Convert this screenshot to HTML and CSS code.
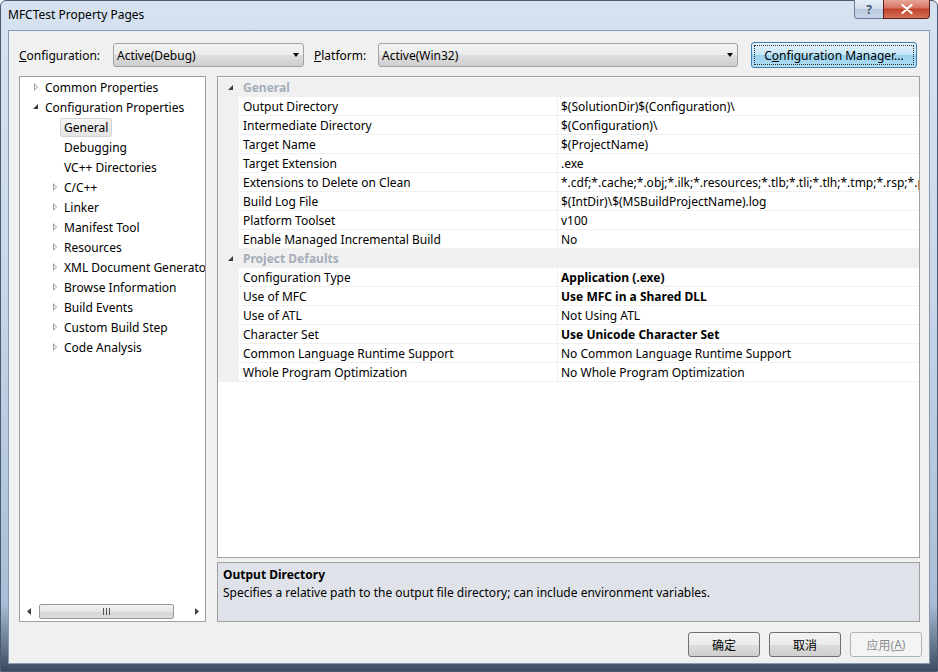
FILE: index.html
```html
<!DOCTYPE html>
<html>
<head>
<meta charset="utf-8">
<link rel="stylesheet" href="styles.css">
</head>
<body>
<div class="window">
  <div class="titlebar">
    <span class="title">MFCTest Property Pages</span>
    <div class="caption-btns">
      <div class="cap help">?</div>
      <div class="cap close">
        <svg width="12" height="10" viewBox="0 0 12 10"><path d="M1.5 1 L10.5 9 M10.5 1 L1.5 9" stroke="#fff" stroke-width="2.2" stroke-linecap="round"/></svg>
      </div>
    </div>
  </div>
  <div class="client">
    <div class="config-row">
      <label class="lbl lbl-config"><u>C</u>onfiguration:</label>
      <div class="combo combo-config"><span>Active(Debug)</span><span class="dd"></span></div>
      <label class="lbl lbl-platform"><u>P</u>latform:</label>
      <div class="combo combo-platform"><span>Active(Win32)</span><span class="dd"></span></div>
      <div class="btn btn-manager"><span class="focus">C<u>o</u>nfiguration Manager...</span></div>
    </div>
    <div class="main">
      <div class="tree">
        <div class="tree-items">
          <div class="ti l0"><span class="arr closed"></span>Common Properties</div>
          <div class="ti l0"><span class="arr open"></span>Configuration Properties</div>
          <div class="ti l1"><span class="arr none"></span><span class="sel">General</span></div>
          <div class="ti l1"><span class="arr none"></span>Debugging</div>
          <div class="ti l1"><span class="arr none"></span>VC++ Directories</div>
          <div class="ti l1"><span class="arr closed"></span>C/C++</div>
          <div class="ti l1"><span class="arr closed"></span>Linker</div>
          <div class="ti l1"><span class="arr closed"></span>Manifest Tool</div>
          <div class="ti l1"><span class="arr closed"></span>Resources</div>
          <div class="ti l1"><span class="arr closed"></span>XML Document Generator</div>
          <div class="ti l1"><span class="arr closed"></span>Browse Information</div>
          <div class="ti l1"><span class="arr closed"></span>Build Events</div>
          <div class="ti l1"><span class="arr closed"></span>Custom Build Step</div>
          <div class="ti l1"><span class="arr closed"></span>Code Analysis</div>
        </div>
        <div class="hscroll">
          <span class="sarrow">
            <svg width="4" height="7" viewBox="0 0 4 7"><path d="M4 0 L0 3.5 L4 7 Z" fill="#404040"/></svg>
          </span>
          <div class="strack"><div class="thumb"><span class="grip"></span></div></div>
          <span class="sarrow">
            <svg width="4" height="7" viewBox="0 0 4 7"><path d="M0 0 L4 3.5 L0 7 Z" fill="#404040"/></svg>
          </span>
        </div>
      </div>
      <div class="right">
        <div class="grid">
          <div class="cat"><span class="gut"><span class="catarr"></span></span><span class="catname">General</span></div>
          <div class="row"><span class="gut"></span><span class="nm">Output Directory</span><span class="vl">$(SolutionDir)$(Configuration)\</span></div>
          <div class="row"><span class="gut"></span><span class="nm">Intermediate Directory</span><span class="vl">$(Configuration)\</span></div>
          <div class="row"><span class="gut"></span><span class="nm">Target Name</span><span class="vl">$(ProjectName)</span></div>
          <div class="row"><span class="gut"></span><span class="nm">Target Extension</span><span class="vl">.exe</span></div>
          <div class="row"><span class="gut"></span><span class="nm">Extensions to Delete on Clean</span><span class="vl">*.cdf;*.cache;*.obj;*.ilk;*.resources;*.tlb;*.tli;*.tlh;*.tmp;*.rsp;*.pgc;*.pgd;*.meta;$(TargetPath)</span></div>
          <div class="row"><span class="gut"></span><span class="nm">Build Log File</span><span class="vl">$(IntDir)\$(MSBuildProjectName).log</span></div>
          <div class="row"><span class="gut"></span><span class="nm">Platform Toolset</span><span class="vl">v100</span></div>
          <div class="row"><span class="gut"></span><span class="nm">Enable Managed Incremental Build</span><span class="vl">No</span></div>
          <div class="cat"><span class="gut"><span class="catarr"></span></span><span class="catname">Project Defaults</span></div>
          <div class="row"><span class="gut"></span><span class="nm">Configuration Type</span><span class="vl b">Application (.exe)</span></div>
          <div class="row"><span class="gut"></span><span class="nm">Use of MFC</span><span class="vl b">Use MFC in a Shared DLL</span></div>
          <div class="row"><span class="gut"></span><span class="nm">Use of ATL</span><span class="vl">Not Using ATL</span></div>
          <div class="row"><span class="gut"></span><span class="nm">Character Set</span><span class="vl b">Use Unicode Character Set</span></div>
          <div class="row"><span class="gut"></span><span class="nm">Common Language Runtime Support</span><span class="vl">No Common Language Runtime Support</span></div>
          <div class="row"><span class="gut"></span><span class="nm">Whole Program Optimization</span><span class="vl">No Whole Program Optimization</span></div>
        </div>
        <div class="desc">
          <div class="desc-title">Output Directory</div>
          <div class="desc-text">Specifies a relative path to the output file directory; can include environment variables.</div>
        </div>
      </div>
    </div>
    <div class="buttons">
      <div class="btn btn-dlg">确定</div>
      <div class="btn btn-dlg">取消</div>
      <div class="btn btn-dlg disabled">应用(<u>A</u>)</div>
    </div>
  </div>
</div>
</body>
</html>
```
FILE: styles.css
```css
* { box-sizing: border-box; }
html, body { margin: 0; padding: 0; }
body {
  width: 938px; height: 672px; overflow: hidden;
  font-family: "Noto Sans", "Noto Sans CJK SC", sans-serif;
  font-size: 12px;
  color: #000;
}
.window {
  width: 938px; height: 672px;
  background: linear-gradient(180deg, #d6e2ef 0%, #cad9ea 40%, #a9bdd6 90%, #3b4b60 100%);
  border: 1px solid #4a5a70;
  border-radius: 6px 6px 0 0;
  display: flex; flex-direction: column;
}
.titlebar {
  height: 29px;
  display: flex; align-items: flex-start; justify-content: space-between;
  padding-left: 7px;
}
.title { font-size: 12px; margin-top: 5px; color: #000; }
.caption-btns { display: flex; margin-right: 7px; margin-top: -1px; }
.cap {
  height: 19px; display: flex; align-items: center; justify-content: center;
  border: 1px solid #6b7d96; border-top: none;
}
.help {
  width: 29px; border-radius: 0 0 0 4px; border-right: none;
  background: linear-gradient(180deg, #e6eef8 0%, #d2dded 50%, #bccbe0 51%, #c8d6ea 100%);
  color: #4a5a70; font-size: 12px; font-weight: bold;
}
.close {
  width: 47px; border-radius: 0 0 4px 0;
  border-color: #5a2020;
  background: linear-gradient(180deg, #e7a597 0%, #d6735f 45%, #c2412a 50%, #d4715a 100%);
}
.client {
  flex: 1;
  margin: 0 7px 7px 7px;
  background: #f0f0f0;
  border: 1px solid #8899b0;
  display: flex; flex-direction: column;
  padding: 11px 9px 0 10px;
}
.config-row {
  display: flex; align-items: center; height: 26px;
}
.lbl { font-size: 12px; flex: none; }
.lbl-config { width: 94px; }
.lbl-platform { margin-left: 10px; width: 64px; }
.combo {
  flex: none;
  height: 24px;
  border: 1px solid #a3a3a3; border-radius: 3px;
  background: linear-gradient(180deg, #f2f2f2 0%, #ebebeb 50%, #dddddd 51%, #cfcfcf 100%);
  display: flex; align-items: center; justify-content: space-between;
  padding: 0 4px 0 3px; font-size: 12px;
}
.combo-config { width: 191px; }
.combo-platform { width: 360px; }
.dd {
  width: 0; height: 0;
  border-left: 3.5px solid transparent; border-right: 3.5px solid transparent;
  border-top: 4px solid #000;
}
.btn {
  flex: none;
  display: flex; align-items: center; justify-content: center;
  border: 1px solid #707070; border-radius: 3px;
  background: linear-gradient(180deg, #f2f2f2 0%, #ebebeb 50%, #dddddd 51%, #cfcfcf 100%);
  font-size: 12px;
}
.btn-manager {
  margin-left: 13px;
  width: 166px; height: 26px;
  border-color: #3c7fb1;
  background: linear-gradient(180deg, #e5f4fc 0%, #c4e5f6 50%, #98d1ef 51%, #b0ddf3 100%);
  padding: 2px;
}
.focus {
  flex: 1; align-self: stretch;
  border: 1px dotted #333;
  display: flex; align-items: center; justify-content: center;
}
.main {
  display: flex; gap: 11px;
  margin-top: 8px;
  height: 546px;
}
.tree {
  flex: none;
  width: 187px;
  background: #fff;
  border: 1px solid #a0a0a0;
  display: flex; flex-direction: column;
  overflow: hidden;
}
.tree-items { flex: 1; padding-top: 0; overflow: hidden; }
.ti {
  height: 20px; display: flex; align-items: center;
  white-space: nowrap; font-size: 12px; color: #000;
}
.ti.l0 { padding-left: 12px; }
.ti.l1 { padding-left: 31px; }
.arr { width: 13px; height: 20px; display: inline-block; position: relative; flex: none; }
.arr.closed::before {
  content: ""; position: absolute; left: 2px; top: 6px;
  width: 0; height: 0;
  border-top: 4px solid transparent; border-bottom: 4px solid transparent;
  border-left: 4px solid #9a9a9a;
}
.arr.closed::after {
  content: ""; position: absolute; left: 3px; top: 7.5px;
  width: 0; height: 0;
  border-top: 2.5px solid transparent; border-bottom: 2.5px solid transparent;
  border-left: 2.2px solid #fff;
}
.arr.open::before {
  content: ""; position: absolute; left: 1px; top: 7px;
  width: 0; height: 0;
  border-left: 5px solid transparent;
  border-bottom: 5px solid #3a3a3a;
}
.sel {
  margin-left: -4px;
  padding: 0 3px 0 3px;
  height: 19px; line-height: 17px;
  border: 1px solid #d4d4d4; border-radius: 2px;
  background: linear-gradient(180deg, #f4f4f4 0%, #e4e4e4 100%);
}
.hscroll {
  flex: none;
  height: 17px; margin: 0 0 1px 0;
  display: flex; align-items: center;
  background: #fff;
}
.sarrow { width: 17px; height: 17px; display: flex; align-items: center; justify-content: center; flex: none; }
.strack { flex: 1; height: 17px; padding: 1px 0; }
.thumb {
  width: 135px; height: 15px; margin-left: 2px;
  border: 1px solid #979797; border-radius: 2px;
  background: linear-gradient(180deg, #f2f2f2 0%, #e6e6e6 50%, #d6d6d6 51%, #dcdcdc 100%);
  display: flex; align-items: center; justify-content: center;
}
.grip {
  width: 7px; height: 7px;
  background: repeating-linear-gradient(90deg, #555 0 1px, transparent 1px 3px);
}
.right {
  flex: 1; min-width: 0;
  display: flex; flex-direction: column; gap: 4px;
}
.grid {
  height: 482px;
  background: #fff;
  border: 1px solid #a0a0a0;
  overflow: hidden;
  padding-top: 1px;
}
.cat, .row {
  height: 19px; display: flex; white-space: nowrap;
}
.cat { background: #f0f0f0; align-items: center; }
.gut { width: 21px; flex: none; background: #f0f0f0; position: relative; align-self: stretch; }
.catarr {
  position: absolute; left: 10px; top: 7px;
  width: 0; height: 0;
  border-left: 5px solid transparent;
  border-bottom: 5px solid #3a3a3a;
}
.catname { padding-left: 4px; font-weight: bold; color: #a4adb8; font-size: 12px; }
.row .nm, .row .vl {
  display: flex; align-items: center;
  border-bottom: 1px solid #f0f0f0;
  font-size: 12px; overflow: hidden;
}
.row .nm { width: 319px; flex: none; padding-left: 4px; border-right: 1px solid #f0f0f0; }
.row .vl { flex: 1; min-width: 0; padding-left: 3px; }
.vl.b { font-weight: bold; }
.desc {
  height: 60px;
  background: #dfe3e9;
  border: 1px solid #a0a0a0;
  padding: 3px 5px;
}
.desc-title { font-weight: bold; font-size: 12px; line-height: 18px; }
.desc-text { font-size: 12px; line-height: 18px; }
.buttons {
  display: flex; justify-content: flex-end; gap: 9px;
  margin-top: 10px; margin-right: -2px;
}
.btn-dlg { width: 72px; height: 25px; }
.btn-dlg.disabled {
  border-color: #adb2b5;
  background: #f4f4f4;
  color: #8d8d8d;
}
```
